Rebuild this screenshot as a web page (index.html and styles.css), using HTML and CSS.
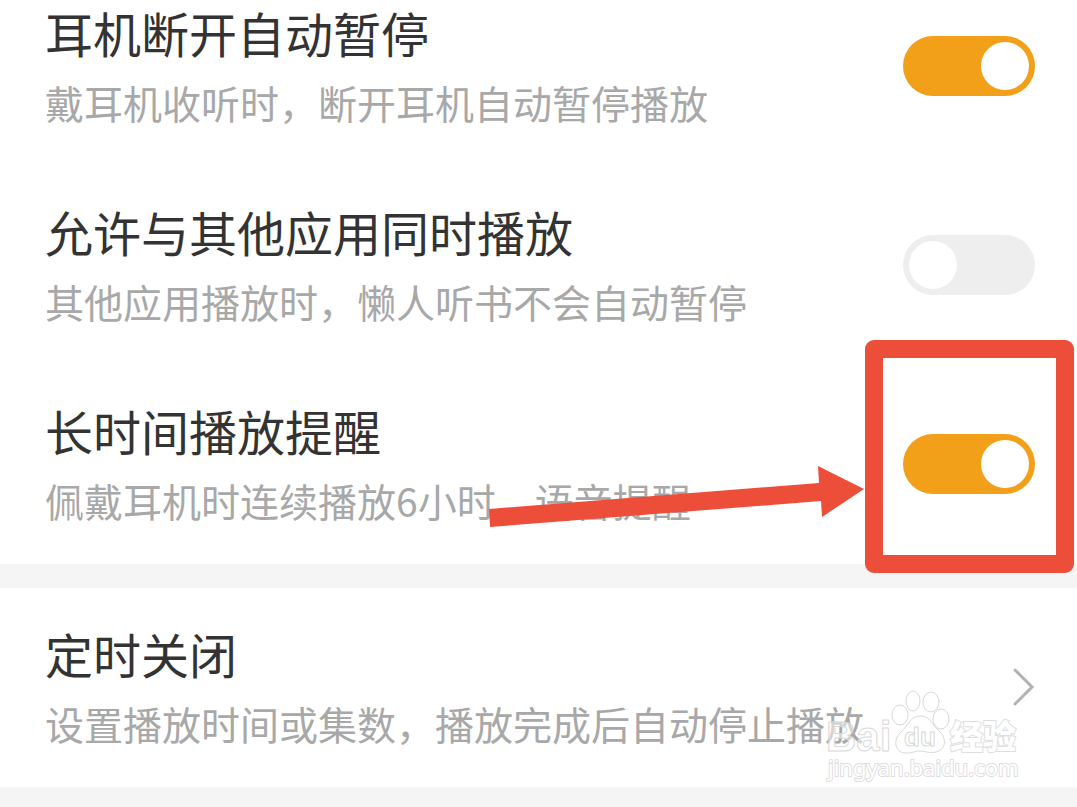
FILE: index.html
```
<!DOCTYPE html>
<html lang="zh-CN">
<head>
  <meta charset="UTF-8">
  <meta name="viewport" content="width=device-width, initial-scale=1">
  <title>播放设置</title>
  <link rel="stylesheet" href="styles.css">
</head>
<body>
  <main class="settings">
    <section class="group">
      <div class="row">
        <label class="text" for="headset">
          <span class="title">耳机断开自动暂停</span>
          <span class="desc">戴耳机收听时，断开耳机自动暂停播放</span>
        </label>
        <input class="switch" type="checkbox" id="headset" checked>
      </div>

      <div class="row">
        <label class="text" for="mix">
          <span class="title">允许与其他应用同时播放</span>
          <span class="desc">其他应用播放时，懒人听书不会自动暂停</span>
        </label>
        <input class="switch" type="checkbox" id="mix">
      </div>

      <div class="row">
        <label class="text" for="remind">
          <span class="title">长时间播放提醒</span>
          <span class="desc">佩戴耳机时连续播放6小时，语音提醒</span>
        </label>
        <input class="switch" type="checkbox" id="remind" checked>
        <svg class="arrow" viewBox="0 0 376 62" aria-hidden="true">
          <path d="M0 43L330 17L329 0L375 23L333 51L332 35L1 61Z"/>
        </svg>
        <div class="highlight"></div>
      </div>
    </section>

    <section class="group">
      <a class="row" href="#timer">
        <span class="text">
          <span class="title">定时关闭</span>
          <span class="desc">设置播放时间或集数，播放完成后自动停止播放</span>
        </span>
        <svg class="chevron" viewBox="0 0 22 38" aria-hidden="true">
          <path d="M2 2L19 19L2 36"/>
        </svg>
        <svg class="watermark" viewBox="0 0 200 96" aria-hidden="true">
          <text class="brand" x="3" y="62">Bai</text>
          <ellipse cx="77" cy="26" rx="8" ry="10"/>
          <ellipse cx="90" cy="12" rx="7" ry="10"/>
          <ellipse cx="108" cy="13" rx="8" ry="10"/>
          <ellipse cx="118" cy="30" rx="8" ry="10"/>
          <path d="M97 27C87 27 85 37 78 43C70 50 71 64 83 64C90 64 92 62 97 62C103 62 107 65 113 63C124 60 123 49 117 43C109 36 108 27 97 27Z"/>
          <text class="du" x="81" y="57">du</text>
          <text class="name" x="127" y="60">经验</text>
          <text class="site" x="5" y="87">jingyan.baidu.com</text>
        </svg>
      </a>
    </section>
  </main>
</body>
</html>
```

FILE: styles.css
```
* {
  box-sizing: border-box;
}

body {
  margin: 0;
  font-family: "Noto Sans CJK SC", sans-serif;
  background: #f5f5f5;
  overflow-x: hidden;
}

.settings {
  display: flex;
  flex-direction: column;
  gap: 24px;
  padding-bottom: 20px;
}

.group {
  background: #fff;
}

.row {
  position: relative;
  display: flex;
  align-items: center;
  justify-content: space-between;
  padding: 35px 42px 37px 45px;
  color: inherit;
  text-decoration: none;
}

/* list is scrolled a little under the header */
.group:first-child .row:first-child {
  padding-top: 2px;
}

.text {
  display: flex;
  flex-direction: column;
  gap: 13px;
}

.title {
  font-size: 48px;
  line-height: 60px;
  color: #333;
}

.desc {
  font-size: 39px;
  line-height: 54px;
  color: #a8a8a8;
}

.switch {
  appearance: none;
  flex: none;
  width: 132px;
  height: 60px;
  margin: 0;
  padding: 6px;
  border-radius: 30px;
  background: #eee;
  display: flex;
  cursor: pointer;
}

.switch::before {
  content: "";
  width: 48px;
  height: 48px;
  border-radius: 50%;
  background: #fff;
}

.switch:checked {
  background: #f29f19;
  justify-content: flex-end;
}

.chevron {
  flex: none;
  width: 22px;
  height: 38px;
  fill: none;
  stroke: #b2b2b2;
  stroke-width: 3;
  stroke-linecap: round;
}

.highlight {
  position: absolute;
  top: -25px;
  right: 3px;
  width: 209px;
  height: 233px;
  border: 18px solid #ec4e3a;
  border-radius: 9px;
  pointer-events: none;
}

.arrow {
  position: absolute;
  top: 101px;
  right: 212px;
  width: 376px;
  height: 62px;
  fill: #ec4e3a;
  pointer-events: none;
}

.watermark {
  position: absolute;
  top: 101px;
  right: 54px;
  width: 200px;
  height: 96px;
  fill: #fff;
  fill-opacity: 0.5;
  stroke: #d8d8d8;
  stroke-width: 1;
  pointer-events: none;
}

.watermark text {
  font-family: "Liberation Sans", "Noto Sans CJK SC", sans-serif;
  font-weight: 700;
}

.watermark .brand {
  font-size: 42px;
}

.watermark .du {
  font-size: 26px;
}

.watermark .name {
  font-size: 33px;
  font-weight: 900;
}

.watermark .name,
.watermark .site {
  fill-opacity: 1;
  stroke: #dedede;
  stroke-width: 2;
  paint-order: stroke;
}

.watermark .site {
  font-family: "Noto Sans", sans-serif;
  font-size: 22px;
  font-weight: 400;
}
```
